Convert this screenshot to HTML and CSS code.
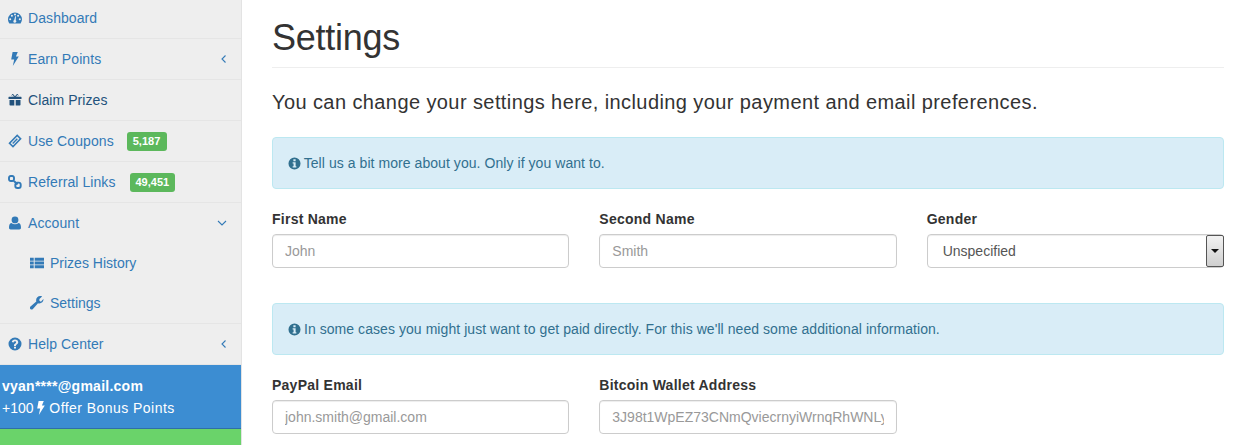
FILE: index.html
```html
<!DOCTYPE html>
<html lang="en">
<head>
<meta charset="utf-8">
<title>Settings</title>
<link rel="stylesheet" href="styles.css">
</head>
<body>
<div class="page">
  <aside class="sidebar">
    <ul class="nav">
      <li class="item"><a class="row"><svg class="ic" viewBox="0 0 14 12"><path d="M7 .5A7 7 0 0 0 0 7.300c0 1.600.5 3 1.400 4.200h11.200A6.900 6.900 0 0 0 14 7.300 7 7 0 0 0 7 .5zM2.200 8.200a1 1 0 1 1 0-2 1 1 0 0 1 0 2zm1.700-3.400a1 1 0 1 1 0-2 1 1 0 0 1 0 2zM7 3.400a1 1 0 1 1 0-2 1 1 0 0 1 0 2zm1.200 6.300a1.500 1.500 0 0 1-2.900-.3c0-.6.4-1.100.9-1.300l1-3.800h.8l-.3 3.900c.6.3 1 .9.5 1.500zm1.900-4.900a1 1 0 1 1 0-2 1 1 0 0 1 0 2zm1.700 3.400a1 1 0 1 1 0-2 1 1 0 0 1 0 2z"/></svg><span>Dashboard</span></a></li>
      <li class="item"><a class="row"><svg class="ic" viewBox="0 0 14 14"><path d="M4.600 0h5.200L7.900 4.600h2.900L4.800 14l1.400-6.600H3.200z"/></svg><span>Earn Points</span><svg class="chev" viewBox="0 0 8 10"><path d="M5.500 1.500 2 5l3.500 3.500"/></svg></a></li>
      <li class="item"><a class="row active"><svg class="ic" viewBox="0 0 14 13"><path d="M1.500 6.500h4.800V12H2.300a.8.8 0 0 1-.8-.8zM7.700 6.500h4.800v4.700a.8.8 0 0 1-.8.8h-4zM1 3.200h3.200A2 2 0 0 1 4.200.4C5.400.4 6.500 1.800 7 3c.5-1.200 1.600-2.600 2.800-2.600a2 2 0 0 1 0 2.800H13a.5.5 0 0 1 .5.5V5.500H.5V3.700A.5.5 0 0 1 1 3.200zM4.500 1.600c-.8 0-.8 1.600 0 1.600h1.300C5.400 2.400 5 1.600 4.500 1.600zM9.500 1.600c-.5 0-.9.8-1.300 1.600h1.300c.8 0 .8-1.600 0-1.600z"/></svg><span>Claim Prizes</span></a></li>
      <li class="item"><a class="row"><svg class="ic" viewBox="0 0 14 14"><path fill-rule="evenodd" d="M9.200.3 13.700 4.800 5 13.700.4 9.200zM9.200 2.500 2.600 9.200 5 11.500 11.500 4.800z"/><path d="M8.800 4.300 9.800 5.300 5.200 10 4.200 9z"/></svg><span>Use Coupons</span><b class="badge first">5,187</b></a></li>
      <li class="item"><a class="row"><svg class="ic" viewBox="0 0 14 14"><path class="line" d="M2.800 1h1.400a1.800 1.800 0 0 1 1.800 1.800v1.400A1.800 1.800 0 0 1 4.200 6H2.800A1.800 1.800 0 0 1 1 4.200V2.800A1.800 1.800 0 0 1 2.800 1zM9.300 7.600h1.400a2 2 0 0 1 2 2v1.400a2 2 0 0 1-2 2H9.300a2 2 0 0 1-2-2V9.600a2 2 0 0 1 2-2zM5 5l4.500 4.500"/></svg><span>Referral Links</span><b class="badge">49,451</b></a></li>
      <li class="item open">
        <a class="row"><svg class="ic" viewBox="0 0 14 14"><path d="M7 .5a3.400 3.400 0 1 1 0 6.800A3.400 3.400 0 0 1 7 .5zM3.400 7c1 .8 2.200 1.200 3.600 1.200S9.600 7.800 10.600 7c1.800.2 2.400 2 2.400 4.800 0 1-.7 1.700-1.700 1.700H2.700c-1 0-1.700-.7-1.700-1.700C1 9 1.600 7.200 3.400 7z"/></svg><span>Account</span><svg class="chev down" viewBox="0 0 10 8"><path d="M1 2l4 4 4-4"/></svg></a>
        <ul class="sub">
          <li><a class="subrow"><svg class="ic" viewBox="0 0 15 12"><path d="M0 .5h4v3H0zM5 .5h10v3H5zM0 4.500h4v3H0zM5 4.500h10v3H5zM0 8.500h4v3H0zM5 8.500h10v3H5z"/></svg><span>Prizes History</span></a></li>
          <li><a class="subrow"><svg class="ic" viewBox="0 0 14 14"><path d="M13.500 3.200c0 2.300-1.900 4.200-4.200 4.200-.5 0-.9-.1-1.300-.2L2.900 12.900c-.7.800-1.800.8-2.500.1-.7-.7-.7-1.800.1-2.500l5.800-5.100c-.1-.4-.2-.8-.2-1.200C6.100 1.900 8 0 10.300 0c.7 0 1.300.2 1.800.4L9.400 3.100v1.700l1.500 1 2.500-2.900z"/></svg><span>Settings</span></a></li>
        </ul>
      </li>
      <li class="item"><a class="row"><svg class="ic" viewBox="0 0 14 14"><path fill-rule="evenodd" d="M7 .5a6.500 6.500 0 1 1 0 13 6.500 6.500 0 0 1 0-13zM6 9.700v1.800h2V9.700zM7 2.500C5.200 2.500 4 3.500 3.800 5l1.800.5c.2-.8.6-1.200 1.300-1.200.7 0 1.200.4 1.200.9 0 .5-.3.800-.9 1.200C6.400 6.900 6 7.400 6 8.300v.6h2v-.4c0-.4.2-.6.8-1 .9-.6 1.400-1.200 1.400-2.300 0-1.600-1.300-2.700-3.200-2.700z"/></svg><span>Help Center</span><svg class="chev" viewBox="0 0 8 10"><path d="M5.500 1.500 2 5l3.500 3.500"/></svg></a></li>
    </ul>
    <div class="account-box">
      <div class="email">vyan****@gmail.com</div>
      <div class="bonus">+100 <svg class="bolt" viewBox="3 0 8 14"><path d="M4.600 0h5.200L7.900 4.600h2.900L4.800 14l1.400-6.600H3.200z"/></svg> <span class="offer">Offer Bonus Points</span></div>
    </div>
    <div class="green-box"></div>
  </aside>
  <main class="main">
    <h1 class="title">Settings</h1>
    <p class="lead">You can change your settings here, including your payment and email preferences.</p>
    <div class="alert"><svg class="info" viewBox="0 0 14 14"><path fill-rule="evenodd" d="M7 .5a6.500 6.500 0 1 1 0 13 6.500 6.500 0 0 1 0-13zM5.800 2.500v2h2.400v-2zM5 5.700v1.300h1v3H5v1.400h4V10H8.200V5.700z"/></svg> Tell us a bit more about you. Only if you want to.</div>
    <div class="fields">
      <div class="field"><label class="lbl" for="f1">First Name</label><input class="ctl" id="f1" placeholder="John"></div>
      <div class="field"><label class="lbl" for="f2">Second Name</label><input class="ctl" id="f2" placeholder="Smith"></div>
      <div class="field"><label class="lbl" for="f3">Gender</label>
        <div class="select-wrap"><select class="ctl sel" id="f3"><option>Unspecified</option></select><span class="sel-btn"></span></div>
      </div>
    </div>
    <div class="alert second"><svg class="info" viewBox="0 0 14 14"><path fill-rule="evenodd" d="M7 .5a6.500 6.500 0 1 1 0 13 6.500 6.500 0 0 1 0-13zM5.800 2.500v2h2.400v-2zM5 5.700v1.300h1v3H5v1.400h4V10H8.200V5.700z"/></svg> In some cases you might just want to get paid directly. For this we'll need some additional information.</div>
    <div class="fields">
      <div class="field"><label class="lbl" for="f4">PayPal Email</label><input class="ctl" id="f4" placeholder="john.smith@gmail.com"></div>
      <div class="field"><label class="lbl" for="f5">Bitcoin Wallet Address</label><input class="ctl" id="f5" placeholder="3J98t1WpEZ73CNmQviecrnyiWrnqRhWNLy"></div>
    </div>
  </main>
</div>
</body>
</html>
```

FILE: styles.css
```css
* { box-sizing: border-box; }
html, body { margin: 0; height: 445px; overflow: hidden; background: #fff; }
body { font-family: "Liberation Sans", Arial, sans-serif; font-size: 14px; line-height: 20px; color: #333; }
ul { list-style: none; margin: 0; padding: 0; }
.page { display: flex; height: 445px; overflow: hidden; }

.sidebar { width: 242px; flex: none; background: #eee; border-right: 1px solid #e3e3e3; margin-top: -2px; height: 447px; overflow: hidden; }
.item { border-bottom: 1px solid #e5e5e5; }
.row { display: flex; align-items: center; height: 40px; padding-left: 8px; color: #337ab7; }
.row.active { color: #23527c; }
.row span { margin-left: 6px; letter-spacing: .08px; }
.ic { width: 14px; height: 14px; fill: currentColor; flex: none; }
.ic .line { fill: none; stroke: currentColor; stroke-width: 1.900; }
.chev { width: 8px; height: 10px; margin-left: auto; margin-right: 13px; fill: none; stroke: #337ab7; stroke-width: 1.100; }
.chev.down { width: 10px; height: 8px; margin-right: 14px; }
.badge { background: #5cb85c; color: #fff; font-size: 11px; line-height: 13px; padding: 3px 6px; border-radius: 3px; margin-left: 14px; height: 19px; display: inline-block; }
.badge.first { margin-left: 13px; padding-right: 7px; }
.subrow { display: flex; align-items: center; height: 40px; padding-left: 30px; color: #337ab7; }
.subrow span { margin-left: 6px; }
.account-box { background: #3c8dd2; color: #fff; height: 64px; padding: 10px 2px 0; border-bottom: 1px solid #2f6fa8; }
.email { font-weight: bold; line-height: 22px; letter-spacing: .25px; }
.bonus { line-height: 22px; }
.offer { letter-spacing: .45px; }
.bolt { width: 8px; height: 14px; fill: #fff; vertical-align: -2px; }
.green-box { background: #6ad36a; height: 40px; }

.main { flex: 1; padding: 0 11px 0 30px; min-width: 0; }
.title { font-size: 36px; font-weight: 400; line-height: 40px; margin: 18px 0 0; padding-bottom: 9px; border-bottom: 1px solid #eee; color: #333; letter-spacing: -.25px; }
.lead { font-size: 20px; line-height: 24px; margin: 22px 0 0; letter-spacing: .41px; color: #333; }
.alert { margin-top: 23px; height: 52px; border: 1px solid #bce8f1; border-radius: 4px; background: #d9edf7; color: #31708f; padding: 15px; line-height: 20px; letter-spacing: .06px; }
.alert.second { margin-top: 35px; }
.info { width: 13px; height: 13px; fill: #31708f; vertical-align: -1.500px; margin-right: -1px; }
.fields { display: grid; grid-template-columns: repeat(3, 1fr); gap: 30px; margin-top: 20px; }
.lbl { display: block; font-weight: bold; line-height: 20px; margin-bottom: 5px; letter-spacing: .25px; color: #333; }
.ctl { display: block; width: 100%; height: 34px; border: 1px solid #ccc; border-radius: 4px; padding: 6px 12px; font: 14px/20px "Liberation Sans", Arial, sans-serif; color: #555; background: #fff; box-shadow: inset 0 1px 1px rgba(0,0,0,.075); outline: none; }
.ctl::placeholder { color: #999; opacity: 1; }
.select-wrap { position: relative; }
.sel { appearance: none; -webkit-appearance: none; padding-left: 15px; }
.sel-btn { position: absolute; right: 0; top: 1px; width: 18px; height: 32px; border: 1px solid #555; border-radius: 2px; background: linear-gradient(#f2f2f2, #cfcfcf); }
.sel-btn::after { content: ""; position: absolute; left: 4px; top: 13px; border: 4px solid transparent; border-top-color: #111; border-bottom: 0; }
```
